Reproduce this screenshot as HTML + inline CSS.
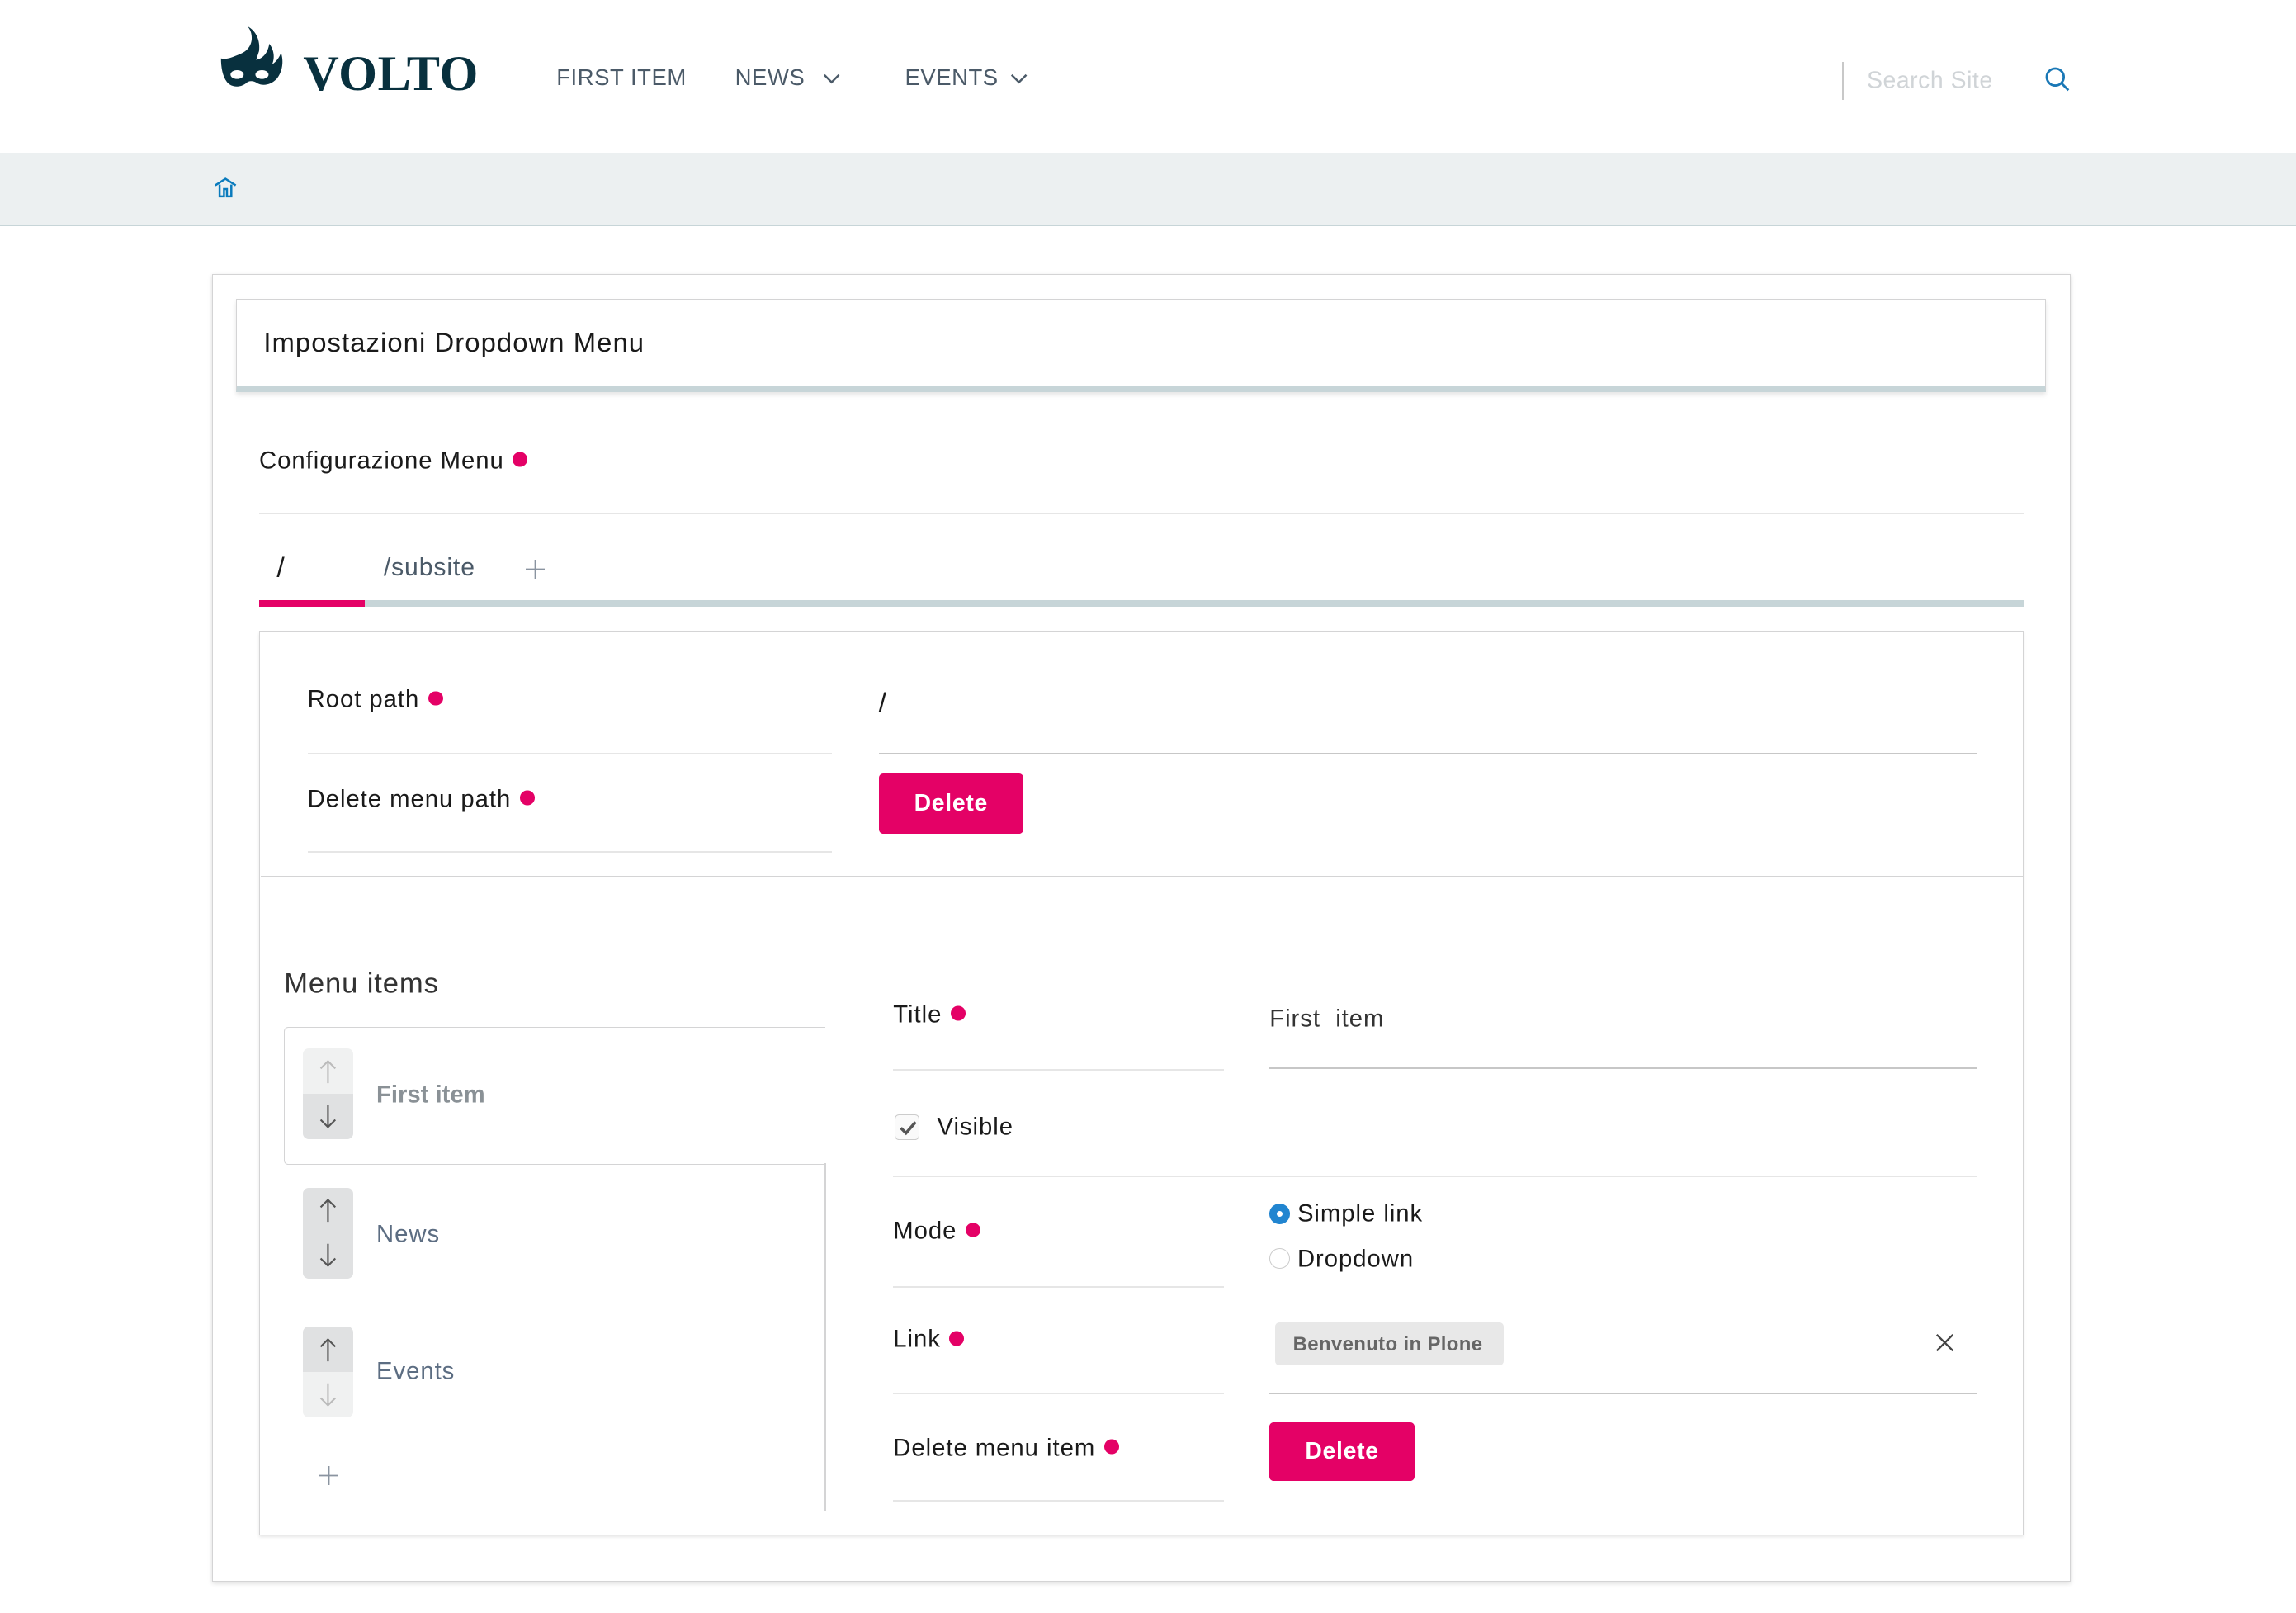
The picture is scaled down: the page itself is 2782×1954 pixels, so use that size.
<!DOCTYPE html>
<html><head><meta charset="utf-8">
<style>
html{zoom:1.7742}
body{margin:0;width:1568px;height:1101px;position:relative;background:#fff;font-family:"Liberation Sans",sans-serif;color:#1a1a1a;overflow:hidden}
.a{position:absolute}
.t{position:absolute;white-space:nowrap;transform:translateY(-50%)}
.l{font-size:16.5px;letter-spacing:.55px}
.dot{display:inline-block;width:10px;height:10px;border-radius:50%;background:#e40166;margin-left:6px;vertical-align:1px}
.hl{position:absolute;height:1px;background:#e6e6e6}
.btn{position:absolute;background:#e40166;color:#fff;font-weight:bold;font-size:16px;letter-spacing:.4px;border-radius:3px;display:flex;align-items:center;justify-content:center}
.nav{position:absolute;top:53px;transform:translateY(-50%);font-size:15.5px;color:#4b5a68;letter-spacing:.3px}
.arr{position:absolute;width:34px;height:62px;border-radius:4px;overflow:hidden}
.arr div{height:31px;display:flex;align-items:center;justify-content:center}
</style></head><body>
<svg width="0" height="0" style="position:absolute"><defs>
<symbol id="up" viewBox="0 0 14 18"><path d="M7 17V2M2 7l5-5 5 5" fill="none" stroke="currentColor" stroke-width="1.2"/></symbol>
<symbol id="dn" viewBox="0 0 14 18"><path d="M7 1v15M2 11l5 5 5-5" fill="none" stroke="currentColor" stroke-width="1.2"/></symbol>
</defs></svg>
<!-- header -->
<svg class="a" style="left:150px;top:17px" width="48" height="47" viewBox="0 0 48 47">
<path d="M19 1c6 3 9 10 8 17l-2 6c5-1 8-5 9-11 3 4 4 9 2 14 3-2 5-5 6-8 2 6 1 13-3 18-4 4-9 5-13 3-3-2-6-2-8 0-4 3-10 3-13-1C2 35 1 29 1 23c4 1 8-1 13-3 5-2 8-6 8-11 0-3-1-6-3-8z" fill="#08303e"/>
<ellipse cx="12" cy="34" rx="4.5" ry="3" fill="#fff"/><ellipse cx="29" cy="34" rx="4.5" ry="3" fill="#fff"/>
</svg>
<div class="t" style="left:207px;top:51px;font-family:'Liberation Serif',serif;font-weight:bold;font-size:34px;color:#08303e;letter-spacing:.3px">VOLTO</div>
<div class="nav" style="left:380px">FIRST ITEM</div>
<div class="nav" style="left:502px">NEWS</div>
<svg class="a" style="left:562px;top:50px" width="12" height="8"><path d="M1 1l5 5 5-5" stroke="#4b5a68" fill="none" stroke-width="1.4"/></svg>
<div class="nav" style="left:618px">EVENTS</div>
<svg class="a" style="left:690px;top:50px" width="12" height="8"><path d="M1 1l5 5 5-5" stroke="#4b5a68" fill="none" stroke-width="1.4"/></svg>
<div class="a" style="left:1258px;top:42px;width:1px;height:26px;background:#c8c8c8"></div>
<div class="t" style="left:1275px;top:55px;font-size:16px;color:#d0d4d7;letter-spacing:.3px">Search Site</div>
<svg class="a" style="left:1396px;top:45px" width="18" height="18"><circle cx="7.5" cy="7.5" r="5.8" stroke="#1a78b6" stroke-width="1.6" fill="none"/><path d="M12 12l4.5 4.5" stroke="#1a78b6" stroke-width="1.6"/></svg>
<div class="a" style="left:0;top:104px;width:1568px;height:50px;background:#ecf0f1;border-bottom:1px solid #c7d5d8"></div>
<svg class="a" style="left:146px;top:120px" width="16" height="16"><path d="M1 6.5L8 2l7 4.5M4 6v8h3v-5h2v5h3V6" stroke="#0a7bbd" stroke-width="1.4" fill="none"/></svg>
<!-- outer -->
<div class="a" style="left:145px;top:187px;width:1268px;height:892px;border:1px solid #d4d4d5;box-shadow:0 1px 3px rgba(0,0,0,.15)"></div>
<div class="a" style="left:161px;top:204px;width:1235px;height:59px;border:1px solid #d4d4d5;border-bottom:4px solid #c7d5d8;box-shadow:0 2px 3px rgba(0,0,0,.1)"></div>
<div class="t" style="left:180px;top:234px;font-size:18.5px;letter-spacing:.6px">Impostazioni Dropdown Menu</div>
<div class="t l" style="left:177px;top:315px">Configurazione Menu<span class="dot"></span></div>
<div class="hl" style="left:177px;top:350px;width:1205px"></div>
<div class="t" style="left:189px;top:388px;font-size:19px">/</div>
<div class="t" style="left:262px;top:388px;font-size:17px;color:#4b5a68;letter-spacing:.5px">/subsite</div>
<svg class="a" style="left:359px;top:382px" width="13" height="13"><path d="M6.5 0v13M0 6.5h13" stroke="#8a94a0" stroke-width="1"/></svg>
<div class="a" style="left:177px;top:410px;width:1205px;height:4px;background:#c7d5d8"></div>
<div class="a" style="left:177px;top:410px;width:72px;height:4px;background:#e40166"></div>
<!-- inner -->
<div class="a" style="left:177px;top:431px;width:1204px;height:616px;border:1px solid #d4d4d5;box-shadow:0 1px 2px rgba(0,0,0,.1)"></div>
<div class="t l" style="left:210px;top:478px">Root path<span class="dot"></span></div>
<div class="hl" style="left:210px;top:514px;width:358px"></div>
<div class="t" style="left:600px;top:480px;font-size:19px">/</div>
<div class="a" style="left:600px;top:514px;width:750px;height:1px;background:#c7c7c7"></div>
<div class="t l" style="left:210px;top:546px">Delete menu path<span class="dot"></span></div>
<div class="hl" style="left:210px;top:581px;width:358px"></div>
<div class="btn" style="left:600px;top:528px;width:99px;height:41px">Delete</div>
<div class="a" style="left:178px;top:598px;width:1204px;height:1px;background:#d4d4d5"></div>
<div class="t" style="left:194px;top:672px;font-size:19.5px;color:#333;letter-spacing:.5px">Menu items</div>
<!-- list -->
<div class="a" style="left:563px;top:794px;width:1px;height:238px;background:#d4d4d5"></div>
<div class="a" style="left:194px;top:701px;width:369px;height:93px;border:1px solid #d4d4d5;border-right:none;border-radius:3px 0 0 3px"></div>
<div class="arr" style="left:207px;top:716px"><div style="background:#f0f1f1;color:#bbb"><svg width="14" height="18"><use href="#up"/></svg></div><div style="background:#e0e1e2;color:#555"><svg width="14" height="18"><use href="#dn"/></svg></div></div>
<div class="t" style="left:257px;top:748px;font-size:16.5px;font-weight:bold;color:#8a9196">First item</div>
<div class="arr" style="left:207px;top:811px"><div style="background:#e0e1e2;color:#555"><svg width="14" height="18"><use href="#up"/></svg></div><div style="background:#e0e1e2;color:#555"><svg width="14" height="18"><use href="#dn"/></svg></div></div>
<div class="t l" style="left:257px;top:843px;color:#5c6d82">News</div>
<div class="arr" style="left:207px;top:906px"><div style="background:#e0e1e2;color:#555"><svg width="14" height="18"><use href="#up"/></svg></div><div style="background:#f0f1f1;color:#bbb"><svg width="14" height="18"><use href="#dn"/></svg></div></div>
<div class="t l" style="left:257px;top:937px;color:#5c6d82">Events</div>
<svg class="a" style="left:218px;top:1001px" width="13" height="13"><path d="M6.5 0v13M0 6.5h13" stroke="#8a94a0" stroke-width="1"/></svg>
<!-- right form -->
<div class="t l" style="left:610px;top:693px">Title<span class="dot"></span></div>
<div class="hl" style="left:610px;top:730px;width:226px"></div>
<div class="t l" style="left:867px;top:696px;color:#333">First&nbsp; item</div>
<div class="a" style="left:867px;top:729px;width:483px;height:1px;background:#c7c7c7"></div>
<div class="a" style="left:611px;top:761px;width:16px;height:16px;border:1px solid #ccc;border-radius:3px;background:#fafafa"></div>
<svg class="a" style="left:613px;top:763px" width="14" height="14"><path d="M2 7l3.5 3.5L12 3" stroke="#555" stroke-width="2" fill="none"/></svg>
<div class="t l" style="left:640px;top:770px">Visible</div>
<div class="hl" style="left:610px;top:803px;width:740px"></div>
<div class="t l" style="left:610px;top:841px">Mode<span class="dot"></span></div>
<div class="hl" style="left:610px;top:878px;width:226px"></div>
<div class="a" style="left:867px;top:822px;width:14px;height:14px;border-radius:50%;background:#2185d0"></div>
<div class="a" style="left:872px;top:827px;width:4px;height:4px;border-radius:50%;background:#fff"></div>
<div class="t l" style="left:886px;top:829px">Simple link</div>
<div class="a" style="left:867px;top:852px;width:13px;height:13px;border-radius:50%;border:1px solid #ccc"></div>
<div class="t l" style="left:886px;top:860px">Dropdown</div>
<div class="t l" style="left:610px;top:915px">Link<span class="dot"></span></div>
<div class="hl" style="left:610px;top:951px;width:226px"></div>
<div class="a" style="left:871px;top:903px;width:156px;height:29px;background:#e8e8e8;border-radius:3px"></div>
<div class="t" style="left:883px;top:918px;font-size:13.5px;font-weight:bold;color:#666;letter-spacing:.2px">Benvenuto in Plone</div>
<svg class="a" style="left:1322px;top:910px" width="13" height="13"><path d="M1 1l11 11M12 1L1 12" stroke="#444" stroke-width="1.3"/></svg>
<div class="a" style="left:867px;top:951px;width:483px;height:1px;background:#c7c7c7"></div>
<div class="t l" style="left:610px;top:989px">Delete menu item<span class="dot"></span></div>
<div class="hl" style="left:610px;top:1024px;width:226px"></div>
<div class="btn" style="left:867px;top:971px;width:99px;height:40px">Delete</div>
</body></html>
